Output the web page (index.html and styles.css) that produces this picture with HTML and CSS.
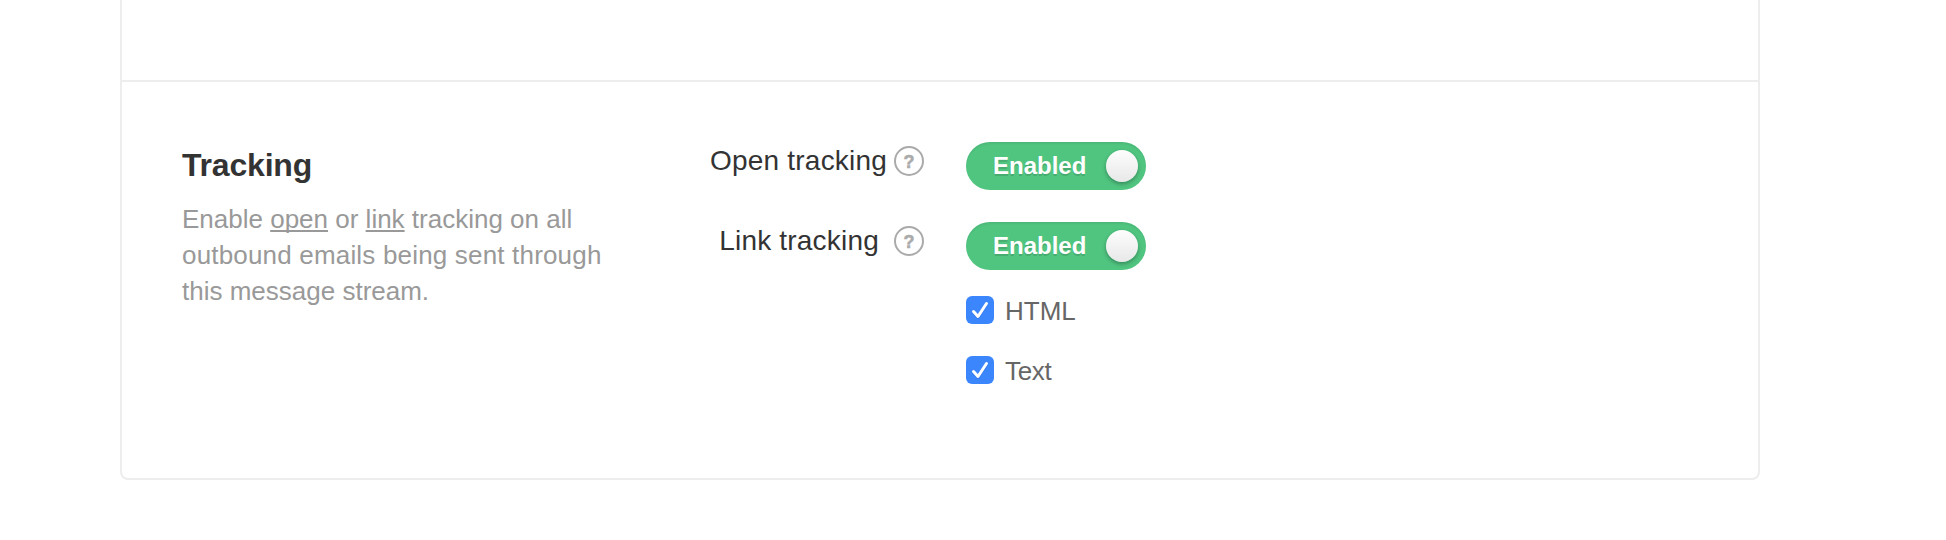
FILE: index.html
```html
<!DOCTYPE html>
<html lang="en">
<head>
<meta charset="utf-8">
<title>Message stream settings</title>
<link rel="stylesheet" href="styles.css">
</head>
<body>
<main class="panel">
  <div class="previous-section"></div>
  <section class="section">
    <div class="intro">
      <h2 class="title">Tracking</h2>
      <p class="description"><span class="tight">Enable <a class="link">open</a> or <a class="link">link</a> tracking on all</span><br>outbound emails being sent through<br><span class="tight">this message stream.</span></p>
    </div>
    <div class="settings">
      <div class="row">
        <div class="label"><span class="open-label">Open tracking</span>
          <svg class="help" viewBox="0 0 30 30"><circle cx="15" cy="15" r="14"/><text x="15" y="21.5">?</text></svg>
        </div>
        <div class="toggle"><span>Enabled</span><i class="knob"></i></div>
      </div>
      <div class="row">
        <div class="label"><span class="link-label">Link tracking</span>
          <svg class="help" viewBox="0 0 30 30"><circle cx="15" cy="15" r="14"/><text x="15" y="21.5">?</text></svg>
        </div>
        <div class="toggle"><span>Enabled</span><i class="knob"></i></div>
      </div>
      <div class="options">
        <label class="option"><svg class="check" viewBox="0 0 28 28"><rect width="28" height="28" rx="6"/><path class="check-shadow" d="M7.5 16.5 12 21.5 20.5 8.5"/><path d="M7.5 15.5 12 20.5 20.5 7.5"/></svg><span>HTML</span></label>
        <label class="option"><svg class="check" viewBox="0 0 28 28"><rect width="28" height="28" rx="6"/><path class="check-shadow" d="M7.5 16.5 12 21.5 20.5 8.5"/><path d="M7.5 15.5 12 20.5 20.5 7.5"/></svg><span class="text-option">Text</span></label>
      </div>
    </div>
  </section>
</main>
</body>
</html>
```
FILE: styles.css
```css
* { box-sizing: border-box; }
body {
  margin: 0;
  background: #fff;
  color: #333;
  font-family: "Liberation Sans", Arial, sans-serif;
}
.panel {
  width: 1640px;
  height: 480px;
  margin-left: 120px;
  border: 2px solid #ededed;
  border-top: 0;
  border-radius: 0 0 8px 8px;
}
.previous-section { height: 82px; border-bottom: 2px solid #ededed; }
.section { display: flex; padding: 60px 60px 0; }
.intro { width: 516px; padding-top: 5px; }
.title {
  margin: 0;
  font-size: 32px;
  line-height: 36px;
  letter-spacing: -0.2px;
}
.description {
  margin: 18px 0 0;
  color: #999;
  font-size: 26px;
  line-height: 36px;
  letter-spacing: 0.18px;
}
.tight { letter-spacing: 0; }
.link {
  text-decoration: underline;
  text-decoration-thickness: 2px;
  text-underline-offset: 2px;
  text-decoration-skip-ink: none;
}
.row { display: flex; gap: 42px; height: 80px; }
.label {
  display: flex;
  justify-content: flex-end;
  width: 226px;
  font-size: 28px;
  line-height: 38px;
  letter-spacing: 0.2px;
  white-space: nowrap;
}
.open-label { margin-right: 7px; }
.link-label { margin-right: 15px; letter-spacing: 0.2px; }
.help { width: 30px; height: 30px; margin-top: 4px; }
.help circle { fill: none; stroke: #aaa; stroke-width: 2; }
.help text {
  fill: #aaa;
  stroke: #aaa;
  stroke-width: 0.5;
  font-size: 18px;
  font-weight: bold;
  text-anchor: middle;
  letter-spacing: 0;
}
.toggle {
  display: flex;
  align-items: center;
  justify-content: space-between;
  width: 180px;
  height: 48px;
  padding: 0 8px 0 27px;
  border-radius: 24px;
  background: #50c580;
  box-shadow: inset 0 2px 2px rgba(0, 0, 0, 0.06);
  color: #fff;
  font-size: 24px;
  font-weight: bold;
  line-height: 48px;
  text-shadow: 0 2px 0 rgba(0, 0, 0, 0.13);
}
.knob {
  width: 32px;
  height: 32px;
  border-radius: 50%;
  background: linear-gradient(#fdfdfd, #e8e8e8);
  box-shadow: 0 2px 4px rgba(0, 0, 0, 0.3);
}
.options {
  display: flex;
  flex-direction: column;
  gap: 30px;
  margin: -6px 0 0 268px;
}
.option {
  display: flex;
  gap: 11px;
  height: 30px;
  color: #666;
  font-size: 26px;
  line-height: 30px;
}
.text-option { letter-spacing: -0.3px; }
.check { width: 28px; height: 28px; }
.check rect { fill: #3b86fc; }
.check path { fill: none; stroke: #fff; stroke-width: 3; stroke-linecap: round; stroke-linejoin: round; }
.check .check-shadow { stroke: #3478e6; }
```
